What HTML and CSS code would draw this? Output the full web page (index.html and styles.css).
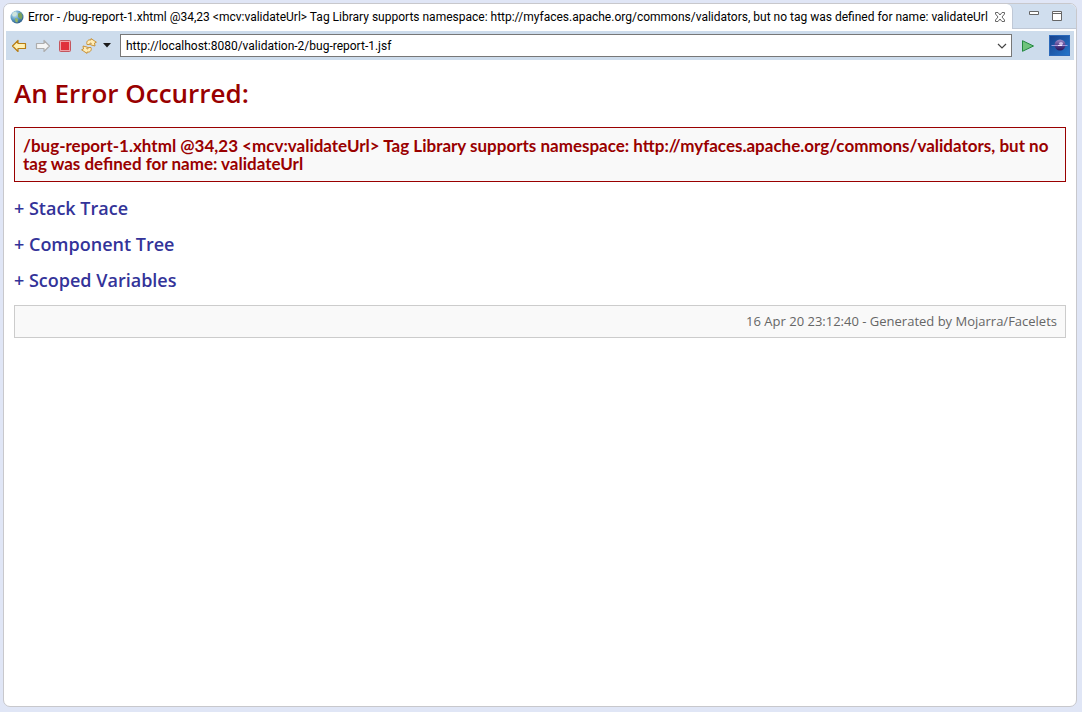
FILE: index.html
```html
<!DOCTYPE html>
<html lang="en">
<head>
<meta charset="utf-8">
<title>Error</title>
<link rel="stylesheet" href="styles.css">
</head>
<body>
<main class="view">
  <header class="tabs">
    <div class="tab">
      <svg class="globe" width="14" height="14" viewBox="0 0 14 14" aria-hidden="true">
        <defs><radialGradient id="sea" cx=".35" cy=".3" r=".8"><stop offset="0" stop-color="#d5eef7"/><stop offset=".5" stop-color="#5d9cc4"/><stop offset="1" stop-color="#22517f"/></radialGradient></defs>
        <circle cx="7" cy="7" r="6.5" fill="url(#sea)"/>
        <path d="M3 2.5 6 1.5 7 4 5.5 6 3.5 6.5 2 5Z" fill="#cfe5dc"/>
        <path d="M8 3.5 11 2.5 12.500 6 11.500 9.500 10 8.5 8 7Z" fill="#7ba15c"/>
        <path d="M5 8 8 9 7.5 12.5 5.5 12Z" fill="#9bb95f"/>
      </svg>
      <h1 class="tab-title">Error - /bug-report-1.xhtml @34,23 &lt;mcv:validateUrl&gt; Tag Library supports namespace: http://myfaces.apache.org/commons/validators, but no tag was defined for name: validateUrl</h1>
      <button class="icon-button" aria-label="Close">
        <svg width="12" height="12" viewBox="0 0 12 12"><path d="M1.5 1.5H4L6 4 8 1.5H10.5V3L8 6 10.5 9V10.5H8L6 8 4 10.5H1.5V9L4 6 1.5 3Z" fill="#fff" stroke="#666"/></svg>
      </button>
    </div>
    <div class="window-buttons">
      <button class="icon-button" aria-label="Minimize"><svg width="12" height="12" viewBox="0 0 12 12"><path d="M1.500 1.500H10.500V4.500H1.500Z" fill="#fff" stroke="#666"/></svg></button>
      <button class="icon-button" aria-label="Maximize"><svg width="12" height="12" viewBox="0 0 12 12"><path d="M1.500 1.500H10.500V10.500H1.500ZM1.500 3.500H10.500" fill="#fff" stroke="#666"/></svg></button>
    </div>
  </header>
  <nav class="toolbar" aria-label="Browser">
    <div class="tools">
      <button class="icon-button" aria-label="Back"><svg width="16" height="14" viewBox="0 0 16 14"><path d="M1.500 7 7 1.500V4.500H14.500V9.500H7V12.500Z" fill="#fff0b3" stroke="#b87d12" stroke-width="1.200" stroke-linejoin="round"/></svg></button>
      <button class="icon-button" aria-label="Forward"><svg width="16" height="14" viewBox="0 0 16 14"><path d="M14.500 7 9 1.500V4.500H1.500V9.500H9V12.500Z" fill="#f5f5f5" stroke="#adadad" stroke-width="1.200" stroke-linejoin="round"/></svg></button>
      <button class="icon-button" aria-label="Stop"><svg width="12" height="12" viewBox="0 0 12 12"><rect x=".5" y=".5" width="11" height="11" rx="1" fill="#eda3a9" stroke="#c4565e"/><rect x="2" y="2" width="8" height="8" fill="#e0303c"/></svg></button>
      <button class="icon-button refresh" aria-label="Refresh"><svg width="16" height="16" viewBox="0 0 16 16"><g fill="#ffedb8" stroke="#c58a2a" stroke-linejoin="round" stroke-width=".9"><path d="M6 6.500C5 3.500 7 1.300 10 2V.6L15.400 4.200 13.500 5 14 8 9.500 6.800 10.300 5.300C9 4.700 8.500 5.500 8.800 6.500Z"/><path d="M10 9.500C11 12.500 9 14.700 6 14V15.400L.6 11.800 2.500 11 2 8 6.500 9.200 5.700 10.700C7 11.300 7.500 10.500 7.200 9.500Z"/></g></svg><svg width="8" height="5" viewBox="0 0 8 5"><path d="M0 0H8L4 4.500Z" fill="#1b1b1b"/></svg></button>
    </div>
    <div class="address">
      <input class="url" type="text" aria-label="Address" value="http://localhost:8080/validation-2/bug-report-1.jsf">
      <button class="icon-button" aria-label="Address history"><svg width="10" height="6" viewBox="0 0 10 6"><path d="M1 1 5 5 9 1" fill="none" stroke="#444" stroke-width="1.200"/></svg></button>
    </div>
    <button class="icon-button" aria-label="Go"><svg width="14" height="12" viewBox="0 0 14 12"><path d="M1.500 .7 12.500 6 1.500 11.300Z" fill="#6fc37c" stroke="#23883f" stroke-linejoin="round"/></svg></button>
    <svg class="logo" width="21" height="21" viewBox="0 0 21 21" role="img" aria-label="Browser logo">
      <defs><linearGradient id="sky" x1="0" y1="0" x2="1" y2="1"><stop offset="0" stop-color="#17408c"/><stop offset="1" stop-color="#2476cb"/></linearGradient><linearGradient id="orb" x2="0" y2="1"><stop offset="0" stop-color="#9b8cc8"/><stop offset=".5" stop-color="#5b4390"/><stop offset="1" stop-color="#281458"/></linearGradient></defs>
      <rect x=".5" y=".5" width="20" height="20" fill="url(#sky)" stroke="#2b69ba"/>
      <circle cx="11" cy="10" r="5.500" fill="url(#orb)"/>
      <path d="M2.500 10.500H18.500" stroke="#9b97dc"/>
      <ellipse cx="12" cy="8.500" rx="2" ry="1.500" fill="#cfbfe8"/><path d="M9 10.500H13" stroke="#f4eaff"/>
    </svg>
  </nav>
  <article class="page">
    <h2 class="headline">An Error Occurred:</h2>
    <p class="message">/bug-report-1.xhtml @34,23 &lt;mcv:validateUrl&gt; Tag Library supports namespace: http://myfaces.apache.org/commons/validators, but no tag was defined for name: validateUrl</p>
    <div class="sections">
      <h3 class="section"><a class="toggle" href="#trace">+ Stack Trace</a></h3>
      <h3 class="section"><a class="toggle" href="#tree">+ Component Tree</a></h3>
      <h3 class="section"><a class="toggle" href="#vars">+ Scoped Variables</a></h3>
    </div>
    <footer class="generated">16 Apr 20 23:12:40 - Generated by Mojarra/Facelets</footer>
  </article>
</main>
</body>
</html>
```
FILE: styles.css
```css
* { box-sizing: border-box; }
body { margin: 0; min-height: 100vh; display: flex; padding: 3px 5px 5px 3px; background: #e0e6f6; font-family: "Open Sans", sans-serif; }
.view { flex: 1; min-width: 0; display: flex; flex-direction: column; border: 1px solid #c8c8cc; border-radius: 7px; background: #fff; overflow: hidden; }
.icon-button { display: flex; align-items: center; justify-content: center; padding: 0; border: 0; background: none; }
.icon-button svg { display: block; }
.tabs { display: flex; height: 25px; background: #d0deee; }
.tab { flex: 1; min-width: 0; display: flex; align-items: center; gap: 4px; padding: 1px 6px 0 6px; background: #fff; border-right: 1px solid #bfc8d6; border-top-right-radius: 6px; }
.globe { flex: none; }
.tab-title { flex: 1; min-width: 0; margin: 0; font-family: Roboto, sans-serif; font-size: 12px; line-height: 16px; font-weight: 400; white-space: nowrap; overflow: hidden; }
.window-buttons { display: flex; gap: 11px; padding: 0 13px 0 15px; border-bottom: 1px solid #bfc8d6; }
.toolbar { display: flex; align-items: center; height: 29px; margin: 2px 2px 0; padding: 0 4px 0 5px; gap: 9px; background: #cddcec; }
.tools { display: flex; align-items: center; gap: 8px; }
.refresh { gap: 6px; margin-left: 2px; }
.address { flex: 1; display: flex; height: 23px; padding: 0 4px; border: 1px solid #777; background: #fff; }
.url { flex: 1; min-width: 0; padding: 0 1px; border: 0; outline: 0; background: none; color: #000; font: 12px/16px Roboto, sans-serif; }
.logo { flex: none; margin-left: 5px; }
.page { padding: 16px 10px; }
.headline { margin: 0 0 16px; color: #900; font-size: 26px; line-height: 35px; font-weight: 600; }
.message { margin: 0; padding: 9px 8px 8px; border: 1px solid #900; background: #f9f9f9; color: #900; font-family: Lato, sans-serif; font-size: 17px; line-height: 18px; font-weight: 700; }
.sections { display: grid; gap: 18px; margin: 17px 0 16px; }
.section { margin: 0; font-size: 18px; line-height: 18px; font-weight: 600; }
.toggle { color: #339; text-decoration: none; }
.generated { padding: 7px 8px; border: 1px solid #ccc; background: #f9f9f9; color: #666; font-size: 13px; line-height: 17px; text-align: right; }
```
